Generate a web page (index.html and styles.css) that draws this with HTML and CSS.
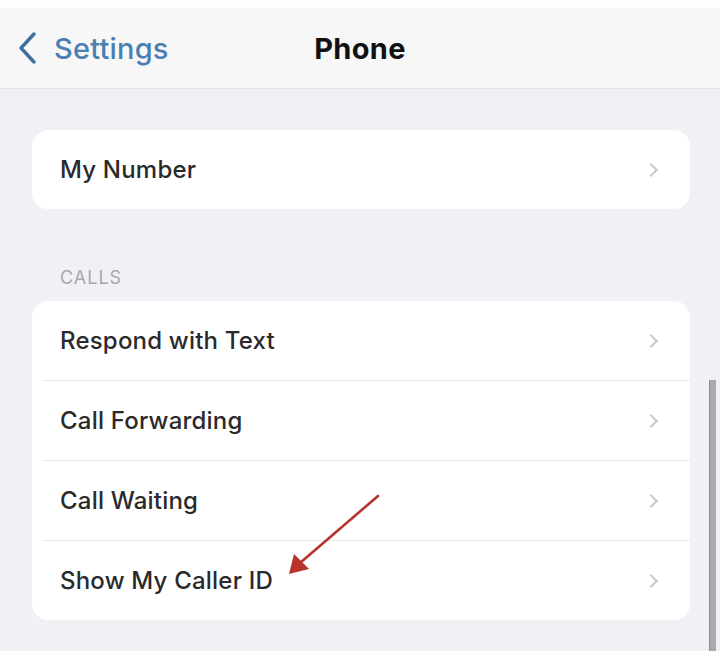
FILE: index.html
```html
<!DOCTYPE html>
<html lang="en">
<head>
  <meta charset="UTF-8" />
  <meta name="viewport" content="width=device-width, initial-scale=1.0"/>
  <title>Phone</title>
  <link rel="stylesheet" href="styles.css">
</head>
<body>
  <header class="navbar">
    <a class="back" href="#">
      <svg class="back-icon" width="22" height="34" viewBox="0 0 22 34">
        <path d="M18 3 L5 17 L18 31" fill="none" stroke="#3f6f9c" stroke-width="3.4" stroke-linecap="round" stroke-linejoin="round"/>
      </svg>
      <span>Settings</span>
    </a>
    <h1 class="title">Phone</h1>
    <div></div>
  </header>

  <main class="content">
    <ul class="group">
      <li class="row"><span>My Number</span><i class="chevron"></i></li>
    </ul>

    <h2 class="group-title">CALLS</h2>
    <ul class="group">
      <li class="row"><span>Respond with Text</span><i class="chevron"></i></li>
      <li class="row"><span>Call Forwarding</span><i class="chevron"></i></li>
      <li class="row"><span>Call Waiting</span><i class="chevron"></i></li>
      <li class="row"><span>Show My Caller ID</span><i class="chevron"></i></li>
    </ul>
  </main>

  <!-- scroll indicator -->
  <div class="scrollbar"></div>

  <!-- red pointer arrow -->
  <svg class="pointer" width="110" height="100" viewBox="0 0 110 100">
    <line x1="98" y1="7" x2="20" y2="74" stroke="#b8332c" stroke-width="2.6" stroke-linecap="round"/>
    <path d="M9 85 L14 65 L29 80 Z" fill="#b8332c"/>
  </svg>
</body>
</html>
```

FILE: styles.css
```css
body {
  margin: 0;
  padding: 0;
  background: #f0f0f5;
  font-family: 'Inter', 'Liberation Sans', sans-serif;
  color: #1c1c1e;
  height: 651px;
  overflow: hidden;
}
.navbar {
  height: 80px;
  margin-top: 8px;
  background: #f7f7f8;
  border-bottom: 1px solid #e2e2e6;
  display: grid;
  grid-template-columns: 1fr auto 1fr;
  align-items: center;
  box-shadow: 0 -8px 0 #fdfdfd;
}
.back {
  display: flex;
  align-items: center;
  gap: 16px;
  padding-left: 16px;
  color: #4c7fb0;
  text-decoration: none;
  font-size: 29px;
  font-weight: 500;
  letter-spacing: 0.2px;
}
.title {
  margin: 0;
  font-size: 29px;
  font-weight: 700;
  letter-spacing: 0.3px;
  color: #111;
}
.content {
  padding: 41px 30px 0 32px;
}
.group {
  list-style: none;
  margin: 0;
  padding: 0;
  background: #fff;
  border-radius: 16px;
  overflow: hidden;
}
.row {
  height: 79px;
  display: flex;
  align-items: center;
  justify-content: space-between;
  margin-left: 10px;
  padding: 0 30px 0 18px;
  font-size: 24px;
  font-weight: 500;
  letter-spacing: 0.2px;
  color: #2a2a2c;
  border-bottom: 1px solid #e9e9ec;
}
.row:last-child {
  border-bottom: none;
}
.chevron {
  width: 8px;
  height: 8px;
  border-top: 2px solid #c8c8cc;
  border-right: 2px solid #c8c8cc;
  transform: rotate(45deg);
  margin-right: 4px;
}
.group-title {
  margin: 58px 0 13px 28px;
  font-size: 18px;
  font-weight: 400;
  letter-spacing: 1px;
  color: #a8a8ad;
}
.scrollbar {
  position: absolute;
  left: 709px;
  top: 380px;
  width: 6px;
  height: 271px;
  background: #a9a9b0;
  border-left: 1px solid #8e8e96;
}
.pointer {
  position: absolute;
  left: 280px;
  top: 489px;
}
```
